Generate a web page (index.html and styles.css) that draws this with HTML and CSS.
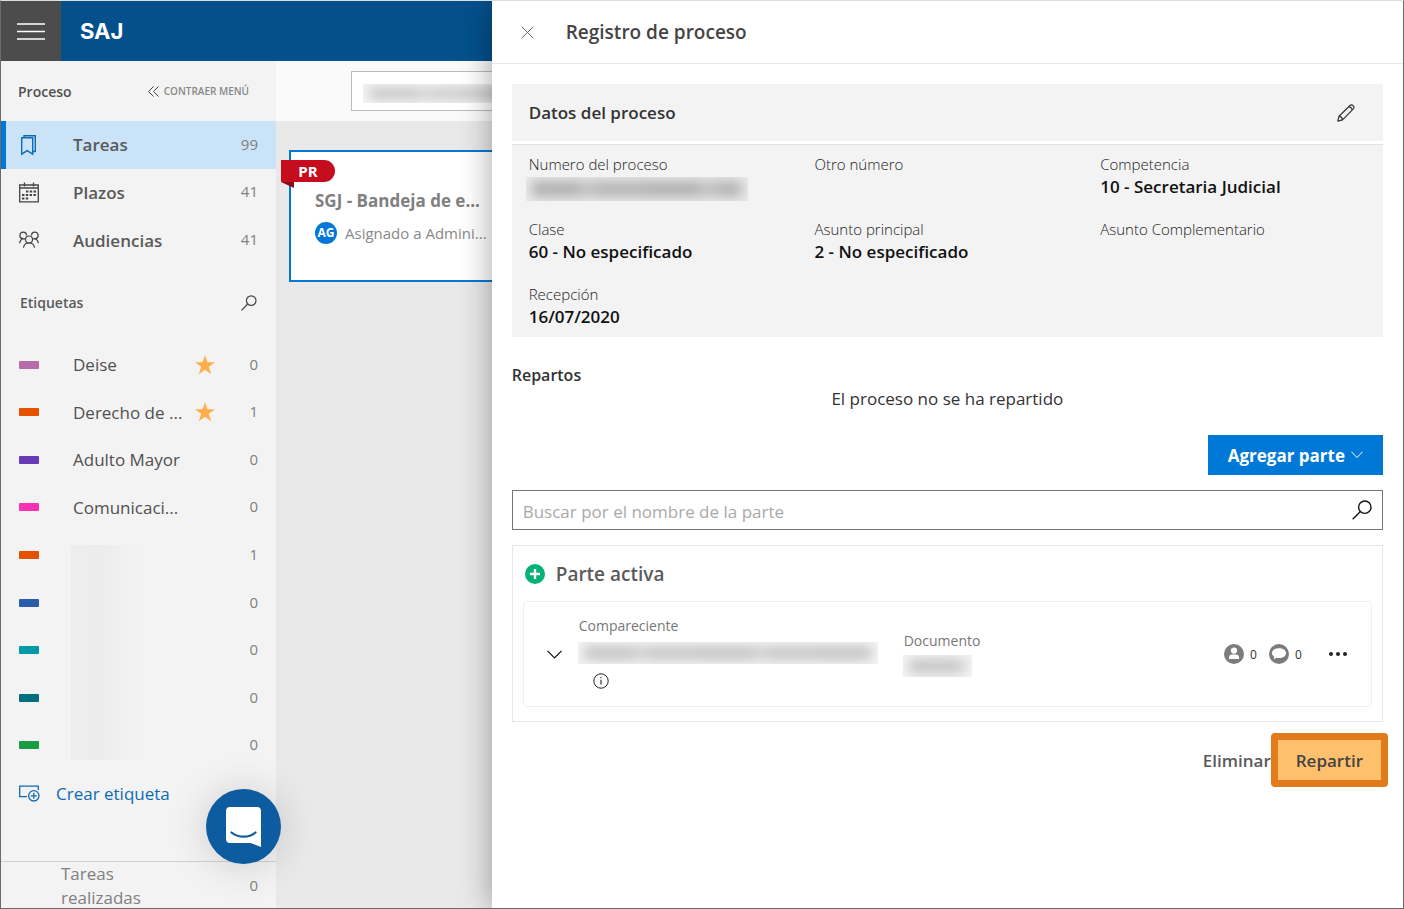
FILE: index.html
```html
<!DOCTYPE html>
<html lang="es">
<head>
<meta charset="utf-8">
<title>SAJ - Registro de proceso</title>
<link rel="stylesheet" href="styles.css">
</head>
<body>
<div class="app">
  <header class="topbar">
    <button class="menu-btn" type="button" aria-label="Menú">
      <svg width="28" height="17" viewBox="0 0 28 17"><path d="M0 1h28M0 8.500h28M0 16h28" stroke="#fff" stroke-width="1.500"/></svg>
    </button>
    <span class="logo">SAJ</span>
  </header>

  <div class="workspace">
    <aside class="sidebar">
      <div class="side-head">
        <span class="side-title">Proceso</span>
        <button class="collapse" type="button">
          <svg width="11" height="11" viewBox="0 0 11 11" fill="none" stroke="#444"><path d="M5.500.500l-5 5 5 5M10.500.500l-5 5 5 5"/></svg>
          CONTRAER MENÚ
        </button>
      </div>

      <nav class="nav">
        <a class="nav-item active" href="#tareas">
          <svg class="icon" width="20" height="22" viewBox="0 0 20 22" fill="none" stroke="#0f6ab4" stroke-width="1.400"><path d="M2.700 3.700h11v16.500l-5.500-3.500-5.500 3.500zM5 3.500V1.700h11.300V17.500h-2"/></svg>
          <span class="name">Tareas</span><span class="count">99</span>
        </a>
        <a class="nav-item" href="#plazos">
          <svg class="icon" width="20" height="21" viewBox="0 0 20 21" fill="none" stroke="#444" stroke-width="1.300"><path d="M.700 3h18.600v16.800H.700zM.700 6h18.600M5.500.500v4M14.500.500v4"/><path d="M7 9.500h10M3 13h14M3 16.500h7" stroke-width="2.200" stroke-dasharray="2.400 1.400"/></svg>
          <span class="name">Plazos</span><span class="count">41</span>
        </a>
        <a class="nav-item" href="#audiencias">
          <svg class="icon" width="20" height="18" viewBox="0 0 20 18" fill="none" stroke="#444" stroke-width="1.200"><circle cx="10" cy="8.500" r="3.500"/><path d="M4.500 16.800c.3-3 2.500-4.800 5.500-4.800s5.200 1.800 5.500 4.800M7.500 4.500A3.300 3.300 0 1 0 3.800 7.700C2 8.500.800 10 .600 12.300M3.800 7.700c.8.300 1.500.3 2.200.2M12.500 4.500a3.300 3.300 0 1 1 3.700 3.200c1.800.8 3 2.300 3.200 4.600M16.200 7.700c-.8.300-1.500.3-2.200.2"/></svg>
          <span class="name">Audiencias</span><span class="count">41</span>
        </a>
      </nav>

      <div class="tags-head">
        <span>Etiquetas</span>
        <button class="icon-btn" type="button" aria-label="Buscar etiqueta">
          <svg width="16" height="16" viewBox="0 0 16 16" fill="none" stroke="#444" stroke-width="1.200"><circle cx="10.200" cy="5.600" r="4.800"/><path d="M6.700 9L.500 15.300"/></svg>
        </button>
      </div>

      <ul class="tags">
        <li class="tag"><i class="swatch mauve"></i><span class="name">Deise</span><svg class="star" width="20" height="20" viewBox="0 0 20 20"><path d="M10 0l2.400 7.300H20l-6.100 4.500 2.300 7.400L10 14.700l-6.200 4.500 2.300-7.400L0 7.300h7.600z" fill="#ffae4a"/></svg><span class="count">0</span></li>
        <li class="tag"><i class="swatch orange"></i><span class="name">Derecho de ...</span><svg class="star" width="20" height="20" viewBox="0 0 20 20"><path d="M10 0l2.400 7.300H20l-6.100 4.500 2.300 7.400L10 14.700l-6.200 4.500 2.300-7.400L0 7.300h7.600z" fill="#ffae4a"/></svg><span class="count">1</span></li>
        <li class="tag"><i class="swatch purple"></i><span class="name">Adulto Mayor</span><span class="count">0</span></li>
        <li class="tag"><i class="swatch pink"></i><span class="name">Comunicaci...</span><span class="count">0</span></li>
        <li class="tag"><i class="swatch orange"></i><span class="masked first"></span><span class="count">1</span></li>
        <li class="tag"><i class="swatch blue"></i><span class="masked"></span><span class="count">0</span></li>
        <li class="tag"><i class="swatch cyan"></i><span class="masked"></span><span class="count">0</span></li>
        <li class="tag"><i class="swatch teal"></i><span class="masked"></span><span class="count">0</span></li>
        <li class="tag"><i class="swatch green"></i><span class="masked last"></span><span class="count">0</span></li>
      </ul>

      <a class="create" href="#crear">
        <svg width="21" height="17" viewBox="0 0 21 17" fill="none" stroke="#0f6ab4" stroke-width="1.300"><path d="M8 11.700H.700V1.200h18.600V5"/><circle cx="14.800" cy="10.800" r="5.200"/><path d="M14.800 7.800v6M11.800 10.800h6"/></svg>
        Crear etiqueta
      </a>

      <a class="done" href="#realizadas"><span class="done-name">Tareas realizadas</span><span class="count">0</span></a>
    </aside>

    <main class="board">
      <div class="toolbar"><div class="filter"><span class="blur light filter-blur"></span></div></div>
      <article class="task">
        <span class="ribbon">PR</span>
        <h3 class="task-title">SGJ - Bandeja de e...</h3>
        <p class="task-user"><span class="avatar">AG</span>Asignado a Admini...</p>
      </article>
    </main>
  </div>

  <button class="chat" type="button" aria-label="Abrir chat">
    <svg width="35" height="40" viewBox="0 0 35 40"><path d="M4 0h27a4 4 0 0 1 4 4v36l-10.500-4H4a4 4 0 0 1-4-4V4a4 4 0 0 1 4-4z" fill="#fff"/><path d="M5.500 25.500c7 5.600 17 5.600 24 0" fill="none" stroke="#0d5ca0" stroke-width="2.200" stroke-linecap="round"/></svg>
  </button>

  <section class="drawer">
    <header class="drawer-head">
      <button class="icon-btn" type="button" aria-label="Cerrar">
        <svg width="13" height="13" viewBox="0 0 13 13" stroke="#666" stroke-width="1"><path d="M.700.700l11.600 11.600M12.300.700L.700 12.300"/></svg>
      </button>
      <h1 class="drawer-title">Registro de proceso</h1>
    </header>

    <div class="drawer-body">
      <div class="data-head">
        <h2 class="data-title">Datos del proceso</h2>
        <button class="icon-btn" type="button" aria-label="Editar">
          <svg width="18" height="18" viewBox="0 0 18 18" fill="none" stroke="#333" stroke-width="1.200" stroke-linejoin="round"><path d="M.800 17.200l1.200-5L13 1.500c2-1.800 5.200 1 3.300 3.300L5.600 15.800zM2 12.200c1.800.3 3.200 1.600 3.600 3.600M12 2.600c1.700.5 2.800 1.600 3.300 3.300"/></svg>
        </button>
      </div>
      <dl class="data">
        <div class="field"><dt>Numero del proceso</dt><dd><span class="blur number-blur"></span></dd></div>
        <div class="field"><dt>Otro número</dt></div>
        <div class="field"><dt>Competencia</dt><dd>10 - Secretaria Judicial</dd></div>
        <div class="field"><dt>Clase</dt><dd>60 - No especificado</dd></div>
        <div class="field"><dt>Asunto principal</dt><dd>2 - No especificado</dd></div>
        <div class="field"><dt>Asunto Complementario</dt></div>
        <div class="field"><dt>Recepción</dt><dd>16/07/2020</dd></div>
      </dl>

      <h2 class="section-title">Repartos</h2>
      <p class="empty">El proceso no se ha repartido</p>

      <button class="add" type="button">Agregar parte
        <svg width="12" height="8" viewBox="0 0 12 8" fill="none" stroke="#fff"><path d="M.500.800L6 6.600 11.500.800"/></svg>
      </button>

      <label class="search">
        <input class="search-input" type="text" placeholder="Buscar por el nombre de la parte" aria-label="Buscar por el nombre de la parte">
        <svg width="20" height="20" viewBox="0 0 20 20" fill="none" stroke="#111" stroke-width="1.400"><circle cx="12.800" cy="7.200" r="6.200"/><path d="M8.400 11.600L.700 19.300"/></svg>
      </label>

      <section class="parties">
        <h2 class="parties-title">
          <svg width="20" height="20" viewBox="0 0 20 20"><circle cx="10" cy="10" r="10" fill="#03b179"/><path d="M10 5v10M5 10h10" stroke="#fff" stroke-width="2.400"/></svg>
          Parte activa
        </h2>
        <div class="party">
          <button class="icon-btn expand" type="button" aria-label="Expandir">
            <svg width="15" height="9" viewBox="0 0 15 9" fill="none" stroke="#111" stroke-width="1.200"><path d="M.500.800l7 7 7-7"/></svg>
          </button>
          <div class="person">
            <span class="party-label">Compareciente</span>
            <span class="blur light name-blur"></span>
            <svg class="info" width="16" height="16" viewBox="0 0 16 16" fill="none" stroke="#222"><circle cx="8" cy="8" r="7.200"/><path d="M8 6.800v4.700M8 4v1.300" stroke-width="1.100"/></svg>
          </div>
          <div class="document">
            <span class="party-label">Documento</span>
            <span class="blur light doc-blur"></span>
          </div>
          <div class="stats">
            <svg width="20" height="20" viewBox="0 0 20 20"><circle cx="10" cy="10" r="10" fill="#7c7c7c"/><circle cx="10" cy="6.600" r="3.100" fill="#fff"/><path d="M5 15v-1.800c0-1.600 1.200-2.400 3-2.700h4c1.800.3 3 1.100 3 2.700V15z" fill="#fff"/></svg>
            <span class="stat">0</span>
            <svg width="20" height="20" viewBox="0 0 20 20"><circle cx="10" cy="10" r="10" fill="#7c7c7c"/><path d="M10 4.300c4 0 7 2 7 4.900s-3 4.900-7 4.900c-1 0-1.900-.1-2.700-.3L4.700 15.500l.5-2.900C3.800 11.700 3 10.500 3 9.200c0-2.900 3-4.900 7-4.900z" fill="#fff"/></svg>
            <span class="stat">0</span>
            <button class="icon-btn more" type="button" aria-label="Más opciones">
              <svg width="18" height="4" viewBox="0 0 18 4" fill="#222"><circle cx="2" cy="2" r="2"/><circle cx="9" cy="2" r="2"/><circle cx="16" cy="2" r="2"/></svg>
            </button>
          </div>
        </div>
      </section>

      <footer class="actions">
        <button class="plain" type="button">Eliminar</button>
        <button class="highlight" type="button">Repartir</button>
      </footer>
    </div>
  </section>
</div>
</body>
</html>
```

FILE: styles.css
```css
*, *::before, *::after { box-sizing: border-box; }

body {
  margin: 0;
  font-family: "Open Sans", "Noto Sans", sans-serif;
  font-size: 16px;
  color: #333;
}

h1, h2, h3, p, dl, dd, ul { margin: 0; padding: 0; }
ul { list-style: none; }
a { color: inherit; text-decoration: none; }
svg { display: block; flex: none; }

button {
  margin: 0;
  padding: 0;
  border: 0;
  background: none;
  font: inherit;
  color: inherit;
}

.icon-btn { display: flex; }

.app {
  position: relative;
  display: flex;
  flex-direction: column;
  height: 100vh;
  border: 1px solid #6b6b6b;
  border-top-color: #d9dedf;
  overflow: hidden;
}

.topbar {
  display: flex;
  flex: none;
  align-items: center;
  height: 60px;
  background: #04508c;
}

.menu-btn {
  display: flex;
  align-items: center;
  justify-content: center;
  width: 60px;
  height: 100%;
  background: #4c4c4c;
}

.logo {
  margin-left: 19px;
  font-family: Inter, sans-serif;
  font-size: 22px;
  font-weight: 700;
  color: #fff;
}

.workspace { display: flex; flex: 1; min-height: 0; }

/* Sidebar */
.sidebar {
  display: flex;
  flex: none;
  flex-direction: column;
  width: 275px;
  background: #f3f3f3;
  overflow: hidden;
}

.sidebar > * { flex-shrink: 0; }

.side-head {
  display: flex;
  align-items: center;
  justify-content: space-between;
  height: 60px;
  padding: 0 27px 0 17px;
}

.side-title { font-size: 14px; font-weight: 600; color: #505050; }

.collapse {
  display: flex;
  align-items: center;
  gap: 5px;
  font-size: 10px;
  font-weight: 600;
  color: #888;
}

.nav { display: grid; grid-auto-rows: 1fr; min-height: 143px; }

.nav-item, .tag {
  display: flex;
  align-items: center;
  padding: 0 18px;
  font-size: 17px;
  color: #505050;
}

.nav-item { font-weight: 600; color: #5a5a5a; }

.active {
  padding-left: 13px;
  border-left: 5px solid #0078d7;
  background: #cbe3f7;
}

.name { flex: 1; margin-left: 34px; white-space: nowrap; }

.count {
  margin-left: auto;
  padding-bottom: 2px;
  font-size: 15px;
  font-weight: 400;
  color: #808080;
}

.tags-head {
  display: flex;
  align-items: center;
  justify-content: space-between;
  height: 77px;
  padding: 0 19px;
  font-size: 14px;
  font-weight: 600;
  color: #5a5a5a;
}

.tags { display: grid; grid-auto-rows: 1fr; min-height: 428px; }

.swatch { width: 20px; height: 8px; border-radius: 1px; }
.mauve { background: #b86cab; }
.orange { background: #e65100; }
.purple { background: #673ab7; }
.pink { background: #f932b4; }
.blue { background: #2a5caa; }
.cyan { background: #0099a8; }
.teal { background: #006f80; }
.green { background: #189d42; }

.star { margin-right: 34px; }

.masked {
  align-self: stretch;
  width: 69px;
  margin-left: 32px;
  background: linear-gradient(90deg, #eee, #ececec 40%, #f3f3f3);
}

.first { margin-top: 14px; }
.last { margin-bottom: 9px; }

.create {
  display: flex;
  align-items: center;
  gap: 16px;
  height: 48px;
  padding-left: 18px;
  font-size: 17px;
  color: #0f6ab4;
}

.done {
  display: flex;
  align-items: center;
  margin-top: 44px;
  padding: 0 18px 0 60px;
  border-top: 1px solid #d2d2d2;
  font-size: 17px;
  line-height: 24px;
  color: #808080;
}

.done-name { width: 100px; }

/* Board */
.board { flex: 1; min-width: 0; background: #e9e9e9; }

.toolbar {
  height: 60px;
  padding: 10px 0 0 75px;
  background: #fafafa;
}

.filter {
  display: flex;
  align-items: center;
  height: 40px;
  padding: 4px 0 0 11px;
  border: 1px solid #bbb;
  background: #fff;
}

.task {
  position: relative;
  margin: 29px 13px 0;
  padding: 37px 24px 35px;
  border: 2px solid #0078d7;
  background: #fff;
}

.task-title {
  font-size: 17px;
  font-weight: 700;
  line-height: 24px;
  color: #808080;
}

.task-user {
  display: flex;
  align-items: center;
  gap: 8px;
  margin-top: 8px;
  font-size: 15px;
  line-height: 24px;
  color: #888;
}

.avatar {
  width: 22px;
  height: 22px;
  border-radius: 50%;
  background: #0078d7;
  font-size: 12px;
  font-weight: 700;
  line-height: 22px;
  text-align: center;
  color: #fff;
}

.ribbon {
  position: absolute;
  top: 8px;
  left: -10px;
  width: 54px;
  height: 22px;
  border-radius: 0 11px 11px 0;
  background: #c50d1e;
  font-size: 15px;
  font-weight: 700;
  line-height: 23px;
  text-align: center;
  color: #fff;
}

.ribbon::after {
  content: "";
  position: absolute;
  top: 100%;
  left: 0;
  width: 13px;
  height: 6px;
  background: #8e0812;
  clip-path: polygon(0 0, 100% 0, 100% 100%);
}

/* Blurred values */
.blur {
  display: block;
  overflow: hidden;
  background: #eaeaea;
}

.blur::before {
  content: "";
  display: block;
  height: 100%;
  padding: 4px 6px;
  background: repeating-linear-gradient(90deg, #b0b0b0 0 50px, #c0c0c0 58px 66px, #b4b4b4 76px 120px);
  background-clip: content-box;
  filter: blur(6px);
}

.light { background: #f4f4f4; }
.light::before { opacity: .7; }

.filter-blur { width: 240px; height: 19px; }
.number-blur { width: 222px; height: 24px; margin-left: -3px; }
.name-blur { width: 300px; height: 22px; margin-left: -1px; }
.doc-blur { width: 69px; height: 22px; margin-left: -1px; }

/* Chat launcher */
.chat {
  position: absolute;
  bottom: 44px;
  left: 205px;
  display: flex;
  align-items: center;
  justify-content: center;
  width: 75px;
  height: 75px;
  border-radius: 50%;
  background: #0d5ca0;
  box-shadow: 0 2px 40px rgba(0, 0, 0, .16);
}

/* Drawer */
.drawer {
  position: absolute;
  top: 0;
  right: 0;
  bottom: 0;
  width: 65%;
  background: #fff;
  box-shadow: 0 0 30px rgba(0, 0, 0, .36);
}

.drawer-head {
  display: flex;
  align-items: center;
  gap: 32px;
  height: 63px;
  padding-left: 29px;
  border-bottom: 1px solid #e6e6e6;
}

.drawer-title { font-size: 19px; font-weight: 600; color: #444; }

.drawer-body { padding: 20px; }

.data-head {
  display: flex;
  align-items: center;
  justify-content: space-between;
  height: 57px;
  padding: 0 28px 0 17px;
  background: #f3f3f3;
}

.data-title { font-size: 17px; font-weight: 600; color: #333; }

.data {
  display: grid;
  grid-template-columns: repeat(3, 1fr);
  grid-auto-rows: 65px;
  column-gap: 3px;
  margin-top: 3px;
  padding: 8px 0 0 17px;
  height: 193px;
  border-top: 1px solid #e2e2e2;
  background: #f3f3f3;
}

.field dt { font-size: 15px; font-weight: 300; line-height: 22px; color: #222; }
.field dd { font-size: 17px; font-weight: 600; line-height: 24px; color: #111; }
.number-blur { margin-top: 2px; }

.section-title {
  margin-top: 26px;
  font-size: 16px;
  font-weight: 600;
  line-height: 24px;
  color: #333;
}

.empty { font-size: 17px; line-height: 24px; text-align: center; }

.add {
  display: flex;
  align-items: center;
  gap: 6px;
  height: 40px;
  margin: 24px 0 15px auto;
  padding: 0 20px;
  background: #0078d7;
  font-size: 17px;
  font-weight: 700;
  color: #fff;
}

.search {
  display: flex;
  align-items: center;
  height: 40px;
  padding: 0 10px;
  border: 1px solid #767676;
}

.search-input {
  flex: 1;
  padding: 2px 0 0;
  border: 0;
  outline: 0;
  background: none;
  font: inherit;
  font-size: 17px;
}

.search-input::placeholder { color: #a9a9a9; }

.parties {
  margin-top: 15px;
  padding: 16px 10px 14px;
  border: 1px solid #e6e6e6;
}

.parties-title {
  display: flex;
  align-items: center;
  gap: 11px;
  padding-left: 2px;
  font-size: 19px;
  font-weight: 600;
  line-height: 24px;
  color: #5a5a5a;
}

.party {
  display: grid;
  grid-template-columns: 55px 325px 1fr auto;
  align-items: center;
  height: 106px;
  margin-top: 15px;
  border: 1px solid #f0f0f0;
  border-radius: 4px;
}

.expand { justify-content: flex-end; padding-right: 17px; }
.person { padding-bottom: 4px; }
.party-label { display: block; font-size: 14px; line-height: 20px; color: #777; }
.name-blur { margin-top: 6px; }
.info { margin: 9px 0 0 14px; }
.doc-blur { margin-top: 4px; }

.stats {
  display: flex;
  align-items: center;
  gap: 6px;
  padding-right: 24px;
  font-size: 12px;
}

.stat { width: 7px; margin-right: 6px; }
.more { margin-left: 15px; }

.actions {
  display: flex;
  align-items: center;
  justify-content: flex-end;
  margin: 11px -5px 0 0;
  font-size: 17px;
  font-weight: 600;
}

.plain { color: #5a5a5a; }

.highlight {
  height: 54px;
  padding: 0 18px;
  border: 7px solid #e27c1a;
  border-radius: 4px;
  background: #ffc06e;
  color: #444;
}
```
